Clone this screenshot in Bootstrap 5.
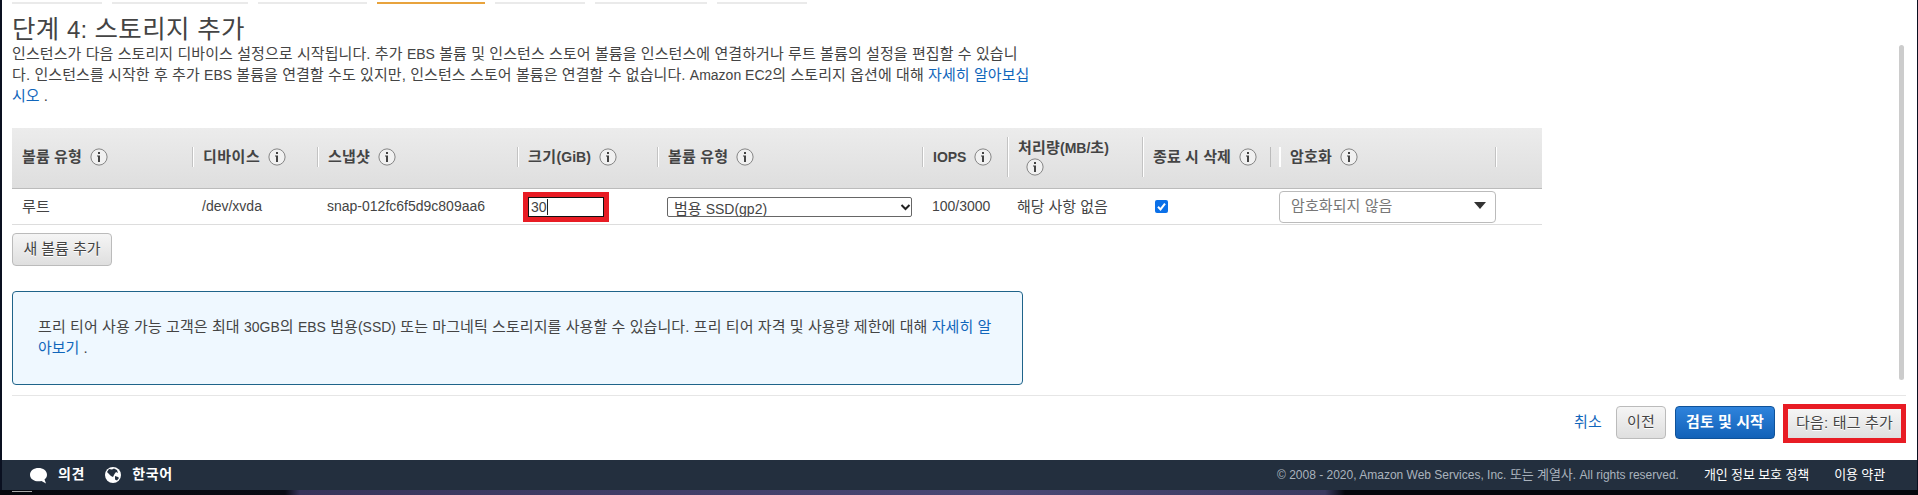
<!DOCTYPE html>
<html lang="ko">
<head>
<meta charset="utf-8">
<title>스토리지 추가</title>
<link href="https://cdn.jsdelivr.net/npm/bootstrap@5.3.0/dist/css/bootstrap.min.css" rel="stylesheet">
<style>
html,body{height:100%}
body{font:14px/21px "Liberation Sans","Noto Sans CJK KR",sans-serif;color:#444;background:#0a1020;overflow:hidden}
a{color:#1166bb;text-decoration:none}
.win{height:490px;margin:0 1px 0 2px;background:#fff}
.ft-line{display:inline-block;white-space:nowrap;font-size:15px;letter-spacing:.08px}
.s0{letter-spacing:-.05px}
.s2{letter-spacing:.2px}
.s5{letter-spacing:.5px}
.s7{letter-spacing:.7px}
.la{font-size:14px;letter-spacing:0}
.steps{height:5px;padding:2px 0 0 10px;gap:10px}
.steps i{height:2px;background:#eaeaea}
.steps i.on{background:#e8a33d}
.pane{height:390px;padding-left:10px}
h1{font-size:24px;line-height:30px;font-weight:400;height:29px;margin:9px 0 0}
h1 .ft-line{font-size:25.500px;letter-spacing:.35px}
h1 .la{font-size:24px}
.intro{height:85px}
.intro>div,.tip>div{height:21px}
.vols{width:1530px;table-layout:fixed;border-collapse:separate;border-spacing:0}
.vols th{height:61px;padding:0 0 2px;border-bottom:1px solid #bbb;background:linear-gradient(#ececec,#dedede);vertical-align:middle}
.vols td{height:36px;padding:0;border-bottom:1px solid #ddd;vertical-align:middle}
.hd{height:20px;display:flex;align-items:center;border-left:1px solid #c3c3c3;box-shadow:inset 1px 0 #fff;padding-left:10px;line-height:20px}
.hd.tall{height:40px}
.hd.first{border:0;box-shadow:none}
.hd.lite{border-color:#fff}
.endsep{height:20px;border-right:1px solid #bbb}
.inf{width:18px;height:18px;flex:none}
.padl{padding-left:10px!important}
.sizebox{width:86px;height:30px;border:5px solid #e81c24;margin-left:6px}
.sizein{height:20px;border:1px solid #111;padding-left:2px;line-height:18px}
.caret{width:1px;height:16px;background:#222;margin-top:1px}
.sel{width:245px;height:20px;border:1px solid #666;border-radius:2px;margin-left:10px;padding-left:6px;line-height:22px;overflow:hidden}
.enc{width:217px;height:32px;border:1px solid #bbb;border-radius:4px;padding:0 9px 2px 11px;color:#777}
.gbtn{height:33px;border:1px solid #bbb;border-radius:4px;background:linear-gradient(#f5f5f5,#dfdfdf);color:#444;display:flex;align-items:center;justify-content:center;padding:0 0 2px;text-shadow:0 1px #fff}
.bbtn{border-color:#0f5299;background:linear-gradient(#2f83dc,#1262b8);color:#fff;text-shadow:none;font-weight:700}
.w100{width:100px}
.tip{width:1011px;height:94px;border:1px solid #1f648a;border-radius:4px;background:#eff8ff;padding:24px 25px;margin-top:25px}
.sbar{width:5px;height:335px;margin:40px 13px 0 0;border-radius:3px;background:#ccc}
.acts{height:65px;border-top:1px solid #e6e6e6;margin:0 11px 0 10px;padding-top:8px}
.acts>a{margin:7px 14px 0 0}
.acts>button{margin-top:2px}
.nextbox{width:123px;height:39px;border:5px solid #e81c24;margin-left:8px}
.foot{height:30px;background:#232f3e;color:#fff;padding:0 32px 0 28px;font-size:12px}
.foot .ft-line{font-size:13px;letter-spacing:-.12px}
.foot b{margin-left:11px}
.foot b .ft-line{font-size:14px;letter-spacing:.7px}
.foot .la{font-size:12px;letter-spacing:0}
.foot .gap-l{margin-left:25px}
.desk{height:5px;background:linear-gradient(90deg,#06070d 0,#0a0b14 285px,#38345a 300px,#4a4874 1000px,#3b3a60 1325px,#05060c 1345px,#05060c)}
.desk i{width:20px;height:1px;margin:1px 0 0 12px;background:#aaa}
</style>
</head>
<body>
<svg width="0" height="0" class="position-absolute"><symbol id="i" viewBox="0 0 18 18"><circle cx="9" cy="9" r="8.100" fill="#f1f1f1" stroke="#858585"/><path d="M8 4h2v2H8zM7 7.500h3V14H8V8.500H7z" fill="#444"/></symbol></svg>
<div class="win">
  <div class="steps d-flex"><i style="width:90px"></i><i style="width:136px"></i><i style="width:109px"></i><i class="on" style="width:108px"></i><i style="width:90px"></i><i style="width:112px"></i><i style="width:90px"></i></div>
  <div class="pane d-flex justify-content-between">
    <div>
      <h1><span class="ft-line">단계 <span class="la">4:</span> 스토리지 추가</span></h1>
      <div class="intro">
        <div><span class="ft-line">인스턴스가 다음 스토리지 디바이스 설정으로 시작됩니다. 추가 <span class="la">EBS</span> 볼륨 및 인스턴스 스토어 볼륨을 인스턴스에 연결하거나 루트 볼륨의 설정을 편집할 수 있습니</span></div>
        <div><span class="ft-line">다. 인스턴스를 시작한 후 추가 <span class="la">EBS</span> 볼륨을 연결할 수도 있지만, 인스턴스 스토어 볼륨은 연결할 수 없습니다. <span class="la">Amazon EC2</span>의 스토리지 옵션에 대해 <a href="#">자세히 알아보십</a></span></div>
        <div><span class="ft-line s0"><a href="#">시오</a> .</span></div>
      </div>
      <table class="vols">
        <colgroup><col style="width:180px"><col style="width:125px"><col style="width:200px"><col style="width:140px"><col style="width:265px"><col style="width:85px"><col style="width:135px"><col style="width:137px"><col style="width:216px"><col style="width:47px"></colgroup>
        <tr>
          <th><div class="hd first"><span class="ft-line">볼륨 유형</span><svg class="inf ms-2"><use href="#i"/></svg></div></th>
          <th><div class="hd"><span class="ft-line s5">디바이스</span><svg class="inf ms-2"><use href="#i"/></svg></div></th>
          <th><div class="hd"><span class="ft-line s2">스냅샷</span><svg class="inf ms-2"><use href="#i"/></svg></div></th>
          <th><div class="hd"><span class="ft-line s5">크기<span class="la">(GiB)</span></span><svg class="inf ms-2"><use href="#i"/></svg></div></th>
          <th><div class="hd"><span class="ft-line s2">볼륨 유형</span><svg class="inf ms-2"><use href="#i"/></svg></div></th>
          <th><div class="hd"><span>IOPS</span><svg class="inf ms-2"><use href="#i"/></svg></div></th>
          <th><div class="hd tall"><div><span class="ft-line s2">처리량<span class="la">(MB/</span>초<span class="la">)</span></span><svg class="inf ms-2 d-block"><use href="#i"/></svg></div></div></th>
          <th><div class="hd tall"><span class="ft-line">종료 시 삭제</span><svg class="inf ms-2"><use href="#i"/></svg><span class="endsep ms-auto me-2"></span></div></th>
          <th><div class="hd lite"><span class="ft-line s2">암호화</span><svg class="inf ms-2"><use href="#i"/></svg></div></th>
          <th><div class="hd"></div></th>
        </tr>
        <tr>
          <td class="padl"><span class="ft-line s2">루트</span></td>
          <td class="padl">/dev/xvda</td>
          <td class="padl">snap-012fc6f5d9c809aa6</td>
          <td><div class="sizebox"><div class="sizein d-flex"><span>30</span><span class="caret"></span></div></div></td>
          <td><div class="sel d-flex justify-content-between"><span class="ft-line s0">범용 <span class="la">SSD(gp2)</span></span><svg width="11" height="18"><path d="M1.500 7l4 4 4-4" fill="none" stroke="#222" stroke-width="2"/></svg></div></td>
          <td class="padl">100/3000</td>
          <td class="padl"><span class="ft-line s0">해당 사항 없음</span></td>
          <td style="padding-left:13px"><svg class="d-block" width="13" height="13"><rect width="13" height="13" rx="2" fill="#0b70e8"/><path d="M3 6.800l2.500 2.600L10 3.600" fill="none" stroke="#fff" stroke-width="2"/></svg></td>
          <td><div class="enc d-flex align-items-center justify-content-between"><span class="ft-line">암호화되지 않음</span><svg width="12" height="7"><path d="M0 0h12L6 7z" fill="#333"/></svg></div></td>
          <td></td>
        </tr>
      </table>
      <button class="gbtn w100" style="margin-top:8px"><span class="ft-line s0">새 볼륨 추가</span></button>
      <div class="tip">
        <div><span class="ft-line">프리 티어 사용 가능 고객은 최대 <span class="la">30GB</span>의 <span class="la">EBS</span> 범용<span class="la">(SSD)</span> 또는 마그네틱 스토리지를 사용할 수 있습니다. 프리 티어 자격 및 사용량 제한에 대해 <a href="#">자세히 알</a></span></div>
        <div><span class="ft-line s0"><a href="#">아보기</a> .</span></div>
      </div>
    </div>
    <div class="sbar"></div>
  </div>
  <div class="acts d-flex justify-content-end align-items-start">
    <a href="#"><span class="ft-line s2">취소</span></a>
    <button class="gbtn" style="width:50px;margin-right:9px"><span class="ft-line s2">이전</span></button>
    <button class="gbtn bbtn w100"><span class="ft-line">검토 및 시작</span></button>
    <div class="nextbox"><div class="gbtn h-100 border-0 rounded-0"><span class="ft-line s2">다음: 태그 추가</span></div></div>
  </div>
  <div class="foot d-flex align-items-center">
    <svg width="17" height="17"><path d="M8.500 1C13 1 17 3.500 17 7.800c0 2-1 3.700-2.500 4.800L16 16.500l-4.500-2.600c-1 .3-2 .4-3 .4C4 14.300 0 11.800 0 7.700S4 1 8.500 1z" fill="#fff"/></svg>
    <b><span class="ft-line">의견</span></b>
    <svg width="16" height="16" style="margin-left:20px"><circle cx="8" cy="8" r="8" fill="#fff"/><path d="M4 2l3 .5 2-1 3 1.500 1 3-2-1-1.500 2L8 10 6 9 3 6 2 5zM10 9l3 1 1 1-2 2.500-2-1z" fill="#232f3e"/></svg>
    <b><span class="ft-line">한국어</span></b>
    <span class="ms-auto" style="color:#aab3bd"><span class="ft-line"><span class="la">© 2008 - 2020, Amazon Web Services, Inc.</span> 또는 계열사. <span class="la">All rights reserved.</span></span></span>
    <span class="gap-l"><span class="ft-line">개인 정보 보호 정책</span></span>
    <span class="gap-l"><span class="ft-line">이용 약관</span></span>
  </div>
</div>
<div class="desk d-flex"><i></i></div>
<script src="https://cdn.jsdelivr.net/npm/bootstrap@5.3.0/dist/js/bootstrap.bundle.min.js"></script>
</body>
</html>
